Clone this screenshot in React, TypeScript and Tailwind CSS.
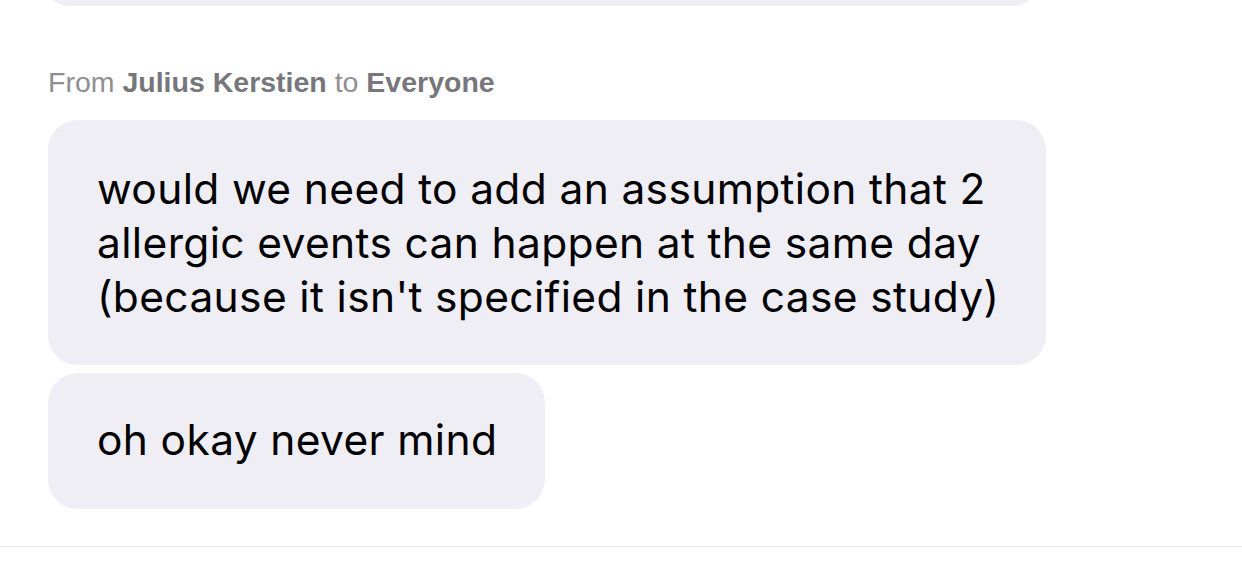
import React from 'react';

const font = { fontFamily: 'Inter, "Liberation Sans", sans-serif' };

function Bubble({ children, className = '' }: { children: React.ReactNode; className?: string }) {
  return (
    <div className={`bg-[#efeef4] rounded-[30px] pl-[49px] pr-[40px] text-black text-[42.5px] leading-[54px] tracking-[0.35px] ${className}`}>
      {children}
    </div>
  );
}

export default function App() {
  const lines = [
    'would we need to add an assumption that 2',
    'allergic events can happen at the same day',
    "(because it isn't specified in the case study)",
  ];

  return (
    <div className="w-[1242px] h-[571px] bg-white overflow-hidden flex flex-col" style={font}>
      {/* tail of the previous message */}
      <div className="ml-[48px] w-[987px] h-[40px] -mt-[34px] bg-[#efeef4] rounded-[30px]" />

      <div
        className="ml-[48px] mt-[60px] text-[28.5px] leading-[32px] text-[#8e8e93]"
        style={{ fontFamily: '"Liberation Sans", Arial, sans-serif' }}
      >
        From <span className="font-bold text-[#77767c]">Julius Kerstien</span> to{' '}
        <span className="font-bold text-[#77767c]">Everyone</span>
      </div>

      <div className="ml-[48px] mt-[22px] flex flex-col items-start gap-[8px]">
        <Bubble className="w-[998px] pt-[42px] pb-[41px]">
          {lines.map((l) => (
            <div key={l} className="whitespace-nowrap">{l}</div>
          ))}
        </Bubble>
        <Bubble className="w-[497px] pt-[40px] pb-[42px] whitespace-nowrap">oh okay never mind</Bubble>
      </div>

      <div className="mt-[37px] h-px bg-[#e5e5ea]" />
    </div>
  );
}
